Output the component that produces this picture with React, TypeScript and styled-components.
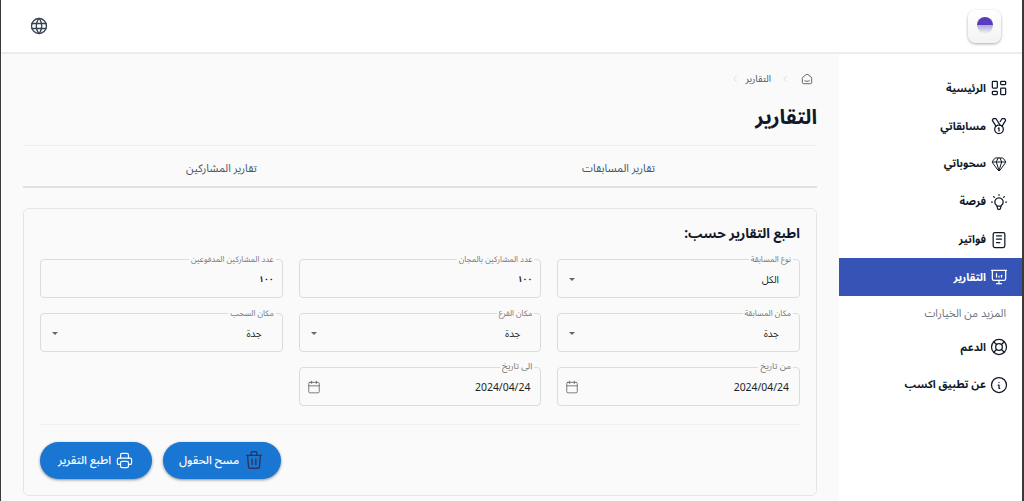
import React from "react";
import styled, { createGlobalStyle } from "styled-components";
import { Calendar, Gem } from "lucide-react";
import { TbLayoutDashboard, TbBulb, TbNotes, TbPresentationAnalytics, TbLifebuoy, TbInfoCircle, TbWorld, TbSmartHome, TbChevronLeft, TbTrash, TbPrinter } from "react-icons/tb";

const arabic = `"Noto Sans Arabic", "Noto Naskh Arabic", "Noto Sans", "DejaVu Sans", sans-serif`;

const Global = createGlobalStyle`
  html, body { margin: 0; padding: 0; height: 100%; overflow: hidden; background: #fff; }
  * { box-sizing: border-box; }
  body { font-family: ${arabic}; color: #111827; }
`;

const Frame = styled.div`
  direction: rtl;
  width: 1024px;
  height: 501px;
  display: flex;
  flex-direction: column;
  overflow: hidden;
  border-left: 1px solid #3a3a3a;
  border-right: 2px solid #3a3a3a;
`;
const Header = styled.header`
  height: 54px;
  flex: none;
  display: flex;
  align-items: center;
  justify-content: space-between;
  padding: 0 21px 0 28px;
  border-bottom: 2px solid #ececee;
  background: #fff;
  svg { stroke-width: 1.6; }
`;
const LogoTile = styled.div`
  width: 33px;
  height: 33px;
  border-radius: 8px;
  background: linear-gradient(#fff, #f3f3f3);
  box-shadow: 0 1px 3px rgba(0,0,0,.35);
  display: flex;
  align-items: center;
  justify-content: center;
`;
const Body = styled.div`
  flex: 1;
  display: flex;
  min-height: 0;
`;
const Sidebar = styled.nav`
  width: 183px;
  flex: none;
  background: #fff;
  padding-top: 15px;
  display: flex;
  flex-direction: column;
`;
const NavItem = styled.div<{ $active?: boolean }>`
  height: 37.8px;
  flex: none;
  display: flex;
  align-items: center;
  gap: 3px;
  padding: 1px 13px 0;
  font-size: 10.8px;
  font-weight: 700;
  color: ${p => (p.$active ? "#fff" : "#111827")};
  background: ${p => (p.$active ? "#3554b5" : "transparent")};
  svg { flex: none; stroke-width: 1.5; }
`;
const GemIcon = styled(Gem)`
  width: 16px;
  height: 16px;
  margin: 0 2px;
`;
const NavHeading = styled.div`
  height: 32px;
  flex: none;
  display: flex;
  align-items: center;
  padding: 4px 16px 0;
  font-size: 11px;
  color: #6b7280;
`;
const Main = styled.main`
  flex: 1;
  min-width: 0;
  background: #fafafa;
  padding: 15px 22px 0 22px;
  display: flex;
  flex-direction: column;
`;
const Crumbs = styled.div`
  height: 20px;
  display: flex;
  align-items: center;
  padding-right: 3px;
  font-size: 9.5px;
  color: #4b5563;
  svg { flex: none; stroke-width: 1.5; }
`;
const CrumbSep = styled(TbChevronLeft)`
  width: 10px;
  height: 10px;
  color: #c8c8c8;
  margin: 0 5px;
`;
const CrumbHomeSep = styled(CrumbSep)`
  margin: 0 10px 0 9px;
`;
const Title = styled.h1`
  margin: 9px 0 0;
  height: 39px;
  font-size: 20.5px;
  font-weight: 700;
  line-height: 40px;
  color: #111827;
`;
const Rule = styled.hr`
  margin: 8px 0 0;
  border: 0;
  height: 1px;
  background: #f0f0f0;
`;
const Tabs = styled.div`
  display: grid;
  grid-template-columns: 1fr 1fr;
  height: 42px;
  border-bottom: 2px solid #e2e2e4;
`;
const Tab = styled.div`
  display: flex;
  align-items: center;
  justify-content: center;
  padding-top: 5px;
  font-size: 11px;
  color: #4b5563;
`;
const Card = styled.section`
  margin-top: 20px;
  height: 288px;
  flex: none;
  border: 1px solid #e5e5e7;
  border-radius: 6px;
  padding: 14px 16px 0;
  background: #fafafa;
`;
const CardTitle = styled.h2`
  margin: 0;
  height: 20px;
  font-size: 13.5px;
  font-weight: 700;
  line-height: 22px;
  color: #111827;
`;
const FieldGrid = styled.div`
  margin-top: 16px;
  display: grid;
  grid-template-columns: repeat(3, 1fr);
  column-gap: 16px;
  row-gap: 15.5px;
`;
const fieldPad = { select: "2px 20px 0 11px", num: "2px 8px 0 10px", date: "2px 10px 0 7px" };
const Field = styled.div<{ $kind: "select" | "num" | "date" }>`
  position: relative;
  height: 38.5px;
  border: 1px solid #dcdcde;
  border-radius: 4px;
  display: flex;
  align-items: center;
  justify-content: space-between;
  padding: ${p => fieldPad[p.$kind]};
  font-size: 10px;
  color: #222;
`;
const Legend = styled.span<{ $large?: boolean }>`
  position: absolute;
  top: ${p => (p.$large ? -6 : -5)}px;
  right: 6px;
  padding: 0 2px;
  background: #fafafa;
  font-size: ${p => (p.$large ? 9 : 8.1)}px;
  line-height: 10px;
  color: #777;
`;
const Caret = styled.span`
  width: 0;
  height: 0;
  border-left: 3.5px solid transparent;
  border-right: 3.5px solid transparent;
  border-top: 3.5px solid #666;
`;
const DateText = styled.span`
  direction: ltr;
  font-family: "Noto Sans", sans-serif;
  font-size: 10.4px;
  color: #222;
`;
const Number100 = styled.span`
  font-size: 8.5px;
  font-weight: 700;
  letter-spacing: -0.6px;
`;
const Divider = styled.hr`
  margin: 18.5px 0 0;
  border: 0;
  height: 1px;
  background: #f0f0f0;
`;
const Actions = styled.div`
  margin-top: 16.5px;
  display: flex;
  gap: 11px;
  flex-direction: row-reverse;
  justify-content: flex-start;
`;
const Button = styled.button<{ $w: number }>`
  width: ${p => p.$w}px;
  height: 37px;
  border: 0;
  border-radius: 19px;
  background: #1976d2;
  color: #fff;
  font: 500 11.5px ${arabic};
  display: flex;
  align-items: center;
  justify-content: center;
  gap: 4px;
  padding: 0;
  box-shadow: 0 1px 3px rgba(0,0,0,.45);
  direction: rtl;
  svg { stroke-width: 1.5; }
`;
const TrashIcon = styled(TbTrash)`
  width: 22px;
  height: 22px;
  color: #2c3560;
`;

const Logo = () => (
  <svg width="24" height="24" viewBox="0 0 24 24" aria-hidden="true">
    <defs>
      <linearGradient id="fade" x1="0" y1="0" x2="0" y2="1">
        <stop offset="0" stopColor="#a9a9d8" />
        <stop offset="1" stopColor="#f5f5f8" />
      </linearGradient>
    </defs>
    <path d="M4 11a8 8 0 0 1 16 0z" fill="#5a3bbd" />
    <path d="M4 11h16a8 9 0 0 1-16 0z" fill="url(#fade)" />
  </svg>
);

const MedalIcon = () => (
  <svg width="20" height="20" viewBox="0 0 24 24" fill="none" stroke="currentColor" strokeLinecap="round" strokeLinejoin="round" aria-hidden="true">
    <path d="M8.5 12.500 4.200 5.600a1 1 0 0 1 .1-1.200L5.400 3h2.800l5 7.600" />
    <path d="M15.500 12.500l4.300-6.900a1 1 0 0 0-.1-1.200L18.600 3h-2.800l-2.300 3.600" />
    <circle cx="12" cy="16" r="5.200" />
    <path d="M11.200 14.800 12 14.200V18" />
  </svg>
);

type Kind = "select" | "num" | "date";
const fields: { label: string; value: string; kind: Kind }[] = [
  { label: "نوع المسابقة", value: "الكل", kind: "select" },
  { label: "عدد المشاركين بالمجان", value: "١٠٠", kind: "num" },
  { label: "عدد المشاركين المدفوعين", value: "١٠٠", kind: "num" },
  { label: "مكان المسابقة", value: "جدة", kind: "select" },
  { label: "مكان الفرع", value: "جدة", kind: "select" },
  { label: "مكان السحب", value: "جدة", kind: "select" },
  { label: "من تاريخ", value: "2024/04/24", kind: "date" },
  { label: "الى تاريخ", value: "2024/04/24", kind: "date" },
];

export default function App() {
  return (
    <Frame>
      <Global />
      <Header>
        <LogoTile><Logo /></LogoTile>
        <TbWorld size={20} color="#374151" />
      </Header>
      <Body>
        <Sidebar>
          <NavItem><TbLayoutDashboard size={20} />الرئيسية</NavItem>
          <NavItem><MedalIcon />مسابقاتي</NavItem>
          <NavItem><GemIcon />سحوباتي</NavItem>
          <NavItem><TbBulb size={20} />فرصة</NavItem>
          <NavItem><TbNotes size={20} />فواتير</NavItem>
          <NavItem $active><TbPresentationAnalytics size={20} />التقارير</NavItem>
          <NavHeading>المزيد من الخيارات</NavHeading>
          <NavItem><TbLifebuoy size={20} />الدعم</NavItem>
          <NavItem><TbInfoCircle size={20} />عن تطبيق اكسب</NavItem>
        </Sidebar>
        <Main>
          <Crumbs>
            <TbSmartHome size={14} color="#4b5563" />
            <CrumbHomeSep />
            <span>التقارير</span>
            <CrumbSep />
          </Crumbs>
          <Title>التقارير</Title>
          <Rule />
          <Tabs>
            <Tab>تقارير المسابقات</Tab>
            <Tab>تقارير المشاركين</Tab>
          </Tabs>
          <Card>
            <CardTitle>اطبع التقارير حسب:</CardTitle>
            <FieldGrid>
              {fields.map(f => (
                <Field key={f.label} $kind={f.kind}>
                  <Legend $large={f.kind === "date"}>{f.label}</Legend>
                  {f.kind === "date" ? <DateText>{f.value}</DateText> : f.kind === "num" ? <Number100>{f.value}</Number100> : <span>{f.value}</span>}
                  {f.kind === "date" && <Calendar size={14} strokeWidth={1.3} color="#555" />}
                  {f.kind === "select" && <Caret />}
                </Field>
              ))}
            </FieldGrid>
            <Divider />
            <Actions>
              <Button $w={112}><TbPrinter size={19} />اطبع التقرير</Button>
              <Button $w={118}><TrashIcon />مسح الحقول</Button>
            </Actions>
          </Card>
        </Main>
      </Body>
    </Frame>
  );
}
